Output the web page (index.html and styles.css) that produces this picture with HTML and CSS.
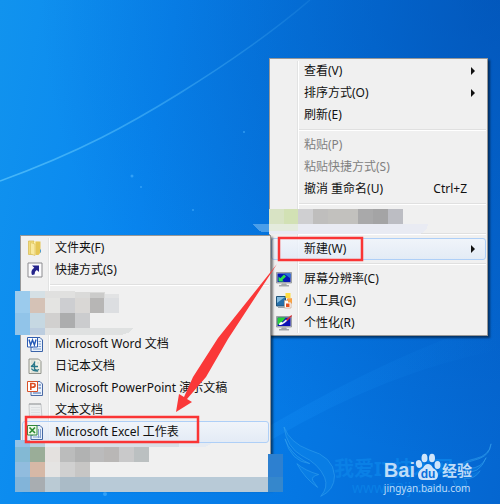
FILE: index.html
```html
<!DOCTYPE html>
<html lang="zh-CN">
<head>
  <meta charset="UTF-8">
  <meta name="viewport" content="width=device-width, initial-scale=1.0">
  <title>新建 Microsoft Excel 工作表</title>
  <link rel="stylesheet" href="styles.css">
</head>
<body>
<main class="desktop">
  <svg class="wallpaper" viewBox="0 0 500 504" preserveAspectRatio="none" aria-hidden="true">
    <defs>
      <linearGradient id="glow" x1="0" y1="1" x2="1" y2="0">
        <stop offset="0" stop-color="#6cd0ff" stop-opacity=".6"/>
        <stop offset="1" stop-color="#6cd0ff" stop-opacity=".1"/>
      </linearGradient>
      <linearGradient id="ray" x1="0" y1="0" x2="1" y2="0">
        <stop offset="0" stop-color="#1c9bff" stop-opacity=".2"/>
        <stop offset="1" stop-color="#1c9bff" stop-opacity="0"/>
      </linearGradient>
    </defs>
    <path d="M0 181C80 152 130 124 180 93S275 30 310 0" fill="none" stroke="url(#glow)" stroke-width="1.5"/>
    <path d="M271 425Q400 350 500 320V350Q390 370 271 440Z" fill="url(#ray)"/>
    <g fill="#4db4ff" opacity=".6">
      <circle cx="132" cy="176" r="1.5"/><circle cx="141" cy="187" r="1"/>
      <circle cx="244" cy="132" r="1"/><circle cx="193" cy="210" r="1"/><circle cx="105" cy="494" r="2"/>
    </g>
  </svg>

  <ul class="menu menu-main">
    <li><button type="button" class="item"><span class="label">查看(V)</span><span class="arrow"></span></button></li>
    <li><button type="button" class="item"><span class="label">排序方式(O)</span><span class="arrow"></span></button></li>
    <li><button type="button" class="item"><span class="label">刷新(E)</span></button></li>
    <li class="sep"></li>
    <li><button type="button" class="item" disabled><span class="label">粘贴(P)</span></button></li>
    <li><button type="button" class="item" disabled><span class="label">粘贴快捷方式(S)</span></button></li>
    <li><button type="button" class="item"><span class="label">撤消 重命名(U)</span><span class="shortcut">Ctrl+Z</span></button></li>
    <li class="sep"></li>
    <li class="hidden-item"></li>
    <li class="sep"></li>
    <li><button type="button" class="item active"><span class="label">新建(W)</span><span class="arrow"></span></button></li>
    <li class="sep"></li>
    <li><button type="button" class="item">
      <svg class="icon" viewBox="0 0 16 16">
        <path d="M.5 1.500h15v10.500H.5z" fill="#b9bcc0" stroke="#85898e" stroke-width=".7"/>
        <path d="M1.500 2.500h13v8.500h-13z" fill="#0718b8"/>
        <path d="M8 2.500h6.500v5z" fill="#2670d8"/>
        <path d="M2.500 10.500V5.500l1.800 1.700L8 3.500l2 2-3.700 3.500 1.500 1.500z" fill="#2ee04a"/>
        <path d="M6 12.500h4l1 1.500h2v1.500H3V14h2z" fill="#a3a6aa"/>
      </svg>
      <span class="label">屏幕分辨率(C)</span></button></li>
    <li><button type="button" class="item">
      <svg class="icon" viewBox="0 0 16 16">
        <path d="M.5 3.500h9v9.500h-9z" fill="#266fa9" stroke="#1f5379"/>
        <path d="M1 4h8L1 10z" fill="#84bcdf"/>
        <path d="M2 13.500h7v1.500H2z" fill="#9ba5ad"/>
        <path d="M9.500 0h5v5h-5z" fill="#ffdc40"/><path d="M11 5.500h5v5h-5z" fill="#f39135"/>
        <path d="M8.500 7.500h6.500v7.500H8.500z" fill="#fff" stroke="#c5a58c" stroke-width=".7"/>
        <path d="M10 10.500h3.500v3.500H10z" fill="#e7501f"/>
        <path d="M12 5.500h4v4h-4z" fill="#f9a244"/>
      </svg>
      <span class="label">小工具(G)</span></button></li>
    <li><button type="button" class="item">
      <svg class="icon" viewBox="0 0 16 16">
        <path d="M.5 1.500h15v10.500H.5z" fill="#b9bcc0" stroke="#85898e" stroke-width=".7"/>
        <path d="M1.500 2.500h13v8.500h-13z" fill="#0e12b4"/>
        <path d="M1.500 2.500H10L5 8l-3.500 2z" fill="#29cf36"/>
        <path d="M3 10q0-3 3-3l1.500 1.200Q7 10 3 10z" fill="#fff"/>
        <path d="M6.500 7.500L10 4.500l1.200 1.300-3.500 3z" fill="#eceef4"/>
        <path d="M10 4.500L15.500 0l.5 1-4.700 5z" fill="#d52e35"/>
        <path d="M6 12.500h4l1 1.500h2v1.500H3V14h2z" fill="#a3a6aa"/>
      </svg>
      <span class="label">个性化(R)</span></button></li>
  </ul>

  <ul class="menu menu-new">
    <li><button type="button" class="item">
      <svg class="icon" viewBox="0 0 16 16">
        <path d="M1.500 1h5.500v13.500H1.500z" fill="#f2dc7c" stroke="#d5b84e" stroke-width=".7"/>
        <path d="M7 1.500h5V14H7z" fill="#fff3b5"/>
        <path d="M8.500 1.500h5v11l-2 2.500h-3z" fill="#e5c654"/>
        <path d="M3.500 2.500L8 4v11.500L3.500 14z" fill="#f9e99f" stroke="#d9bd58" stroke-width=".6"/>
        <path d="M13 9.500h1v3h-1z" fill="#4d9bd0"/>
      </svg>
      <span class="label">文件夹(F)</span></button></li>
    <li><button type="button" class="item">
      <svg class="icon" viewBox="0 0 16 16">
        <path d="M1 1h14v14H1z" fill="#fbfbfd" stroke="#8b8b8f"/>
        <path d="M5 3.500h7v6.500L9.800 8Q7.500 9 7.500 12.500L5 13Q3 8.500 7.300 5.700z" fill="#25248b"/>
      </svg>
      <span class="label">快捷方式(S)</span></button></li>
    <li class="sep"></li>
    <li class="hidden-item"></li>
    <li class="hidden-item"></li>
    <li><button type="button" class="item">
      <svg class="icon" viewBox="0 0 16 16">
        <path d="M6 1.500h7l2.500 2.500v11.500H4V11h2z" fill="#e9f1fc" stroke="#3a63a8"/>
        <path d="M11.500 5.500h2.500M11.500 8h2.500M11.500 10.500h2.500M6 13h8" stroke="#7d9fd0"/>
        <path d="M.5 1.500h10v9.500H.5z" fill="#fff" stroke="#2d5bb0"/>
        <path d="M2 3.500l1.600 5.500 1.900-5 1.900 5L9 3.500" fill="none" stroke="#2459b7" stroke-width="1.400"/>
      </svg>
      <span class="label">Microsoft Word 文档</span></button></li>
    <li><button type="button" class="item">
      <svg class="icon" viewBox="0 0 16 16">
        <path d="M2 1h9.500L14 3.500V15.500H2z" fill="#eeefe5" stroke="#90938c"/>
        <path d="M4 3h4M4 5h2M10 5h2M4 14h8" stroke="#bdc6bf" stroke-width=".7"/>
        <path d="M8 3.500Q7 7 4 8.500h7M7.500 5.500v5.500q2 2 4.500.5M4.500 10.500q1 2.500 6.500 2.500" fill="none" stroke="#277789" stroke-width="1.300"/>
      </svg>
      <span class="label">日记本文档</span></button></li>
    <li><button type="button" class="item">
      <svg class="icon" viewBox="0 0 16 16">
        <path d="M6 1.500h7l2.500 2.500v11.500H4V11h2z" fill="#e9f1fc" stroke="#4d6ba5"/>
        <path d="M11.500 5h2.500M11.500 8h2.500M6 13h8" stroke="#7897c8" stroke-width="1.500"/>
        <path d="M.5 1.500h10v10H.5z" fill="#fff" stroke="#d65029"/>
        <path d="M3.800 10V3.500h2q2.500 0 2.300 1.900Q8 7.300 5.500 7.300H4" fill="none" stroke="#dc4c22" stroke-width="1.600"/>
      </svg>
      <span class="label">Microsoft PowerPoint 演示文稿</span></button></li>
    <li><button type="button" class="item">
      <svg class="icon" viewBox="0 0 16 16">
        <path d="M2 2h12l1 14H2.500z" fill="#eceeef" stroke="#b6b8ba" stroke-width=".7"/>
        <path d="M3 1v2M5 1v2M7 1v2M9 1v2M11 1v2M13 1v2" stroke="#8c8e90" stroke-width=".8"/>
        <path d="M4 5.500h9M4 8h9M4 10.500h9M4 13h9" stroke="#d5d9dc" stroke-width=".7"/>
      </svg>
      <span class="label">文本文档</span></button></li>
    <li><button type="button" class="item active">
      <svg class="icon" viewBox="0 0 16 16">
        <path d="M6 1.500h7l2.500 2.500v11.500H4V11h2z" fill="#e9f1fc" stroke="#4569a4"/>
        <path d="M11.500 5v9M13.500 5v9M6 13h8" stroke="#85a2d0"/>
        <path d="M.5 1.500h9.500v9.500H.5z" fill="#effaeb" stroke="#31893a"/>
        <path d="M2.500 3.500l5.500 5.500M8 3.500L2.500 9" stroke="#2d8c34" stroke-width="1.700"/>
      </svg>
      <span class="label">Microsoft Excel 工作表</span></button></li>
    <li class="hidden-item"></li>
    <li class="hidden-item"></li>
  </ul>

  <!-- pixelated blocks over the private menu entries -->
  <svg class="overlay" viewBox="0 0 500 504" width="500" height="504" aria-hidden="true" shape-rendering="crispEdges">
    <path d="M269 224h159q-1 8-8 10H269z" fill="#e9ebf3"/>
    <path d="M253 224h16v8h-6q-6-1-10-8z" fill="#4a9ee9"/>
    <path d="M269 209h15v15h-15z" fill="#d8e3c4"/><path d="M284 209h14v15h-14z" fill="#d2e1b4"/>
    <path d="M269 224h29v7h-29z" fill="#e4ebdd"/>
    <path d="M298 209h15v15h-15z" fill="#cfcfd1"/><path d="M313 209h15v15h-15z" fill="#bfbebd"/>
    <path d="M328 209h30v15h-30z" fill="#c2c1be"/><path d="M358 209h15v15h-15z" fill="#a9a9aa"/>
    <path d="M373 209h15v15h-15z" fill="#a4a4a5"/><path d="M388 209h15v15h-15z" fill="#bcbdc3"/>

    <path d="M15 291h15v22H15z" fill="#9bcbed"/><path d="M15 313h15v22H15z" fill="#91c4e9"/>
    <path d="M30 291h15v7H30z" fill="#d5e0e5"/><path d="M45 291h30v7H45z" fill="#e0e0df"/>
    <path d="M75 292h30v6H75z" fill="#dadad9"/><path d="M90 293h14v5H90z" fill="#cbcbca"/><path d="M105 294h14v4h-14z" fill="#e2e3e4"/>
    <path d="M30 298h15v15H30z" fill="#d5c2b6"/><path d="M45 298h15v15H45z" fill="#e4e4e2"/>
    <path d="M60 298h15v15H60z" fill="#cdced1"/><path d="M75 298h15v15H75z" fill="#d9d7d5"/>
    <path d="M90 298h14v15H90z" fill="#b7b6b5"/><path d="M104 298h15v15h-15z" fill="#dcdee1"/>
    <path d="M30 313h15v15H30z" fill="#c6d8e2"/><path d="M45 313h15v15H45z" fill="#d1d0cf"/>
    <path d="M60 313h15v15H60z" fill="#acadae"/><path d="M75 313h15v15H75z" fill="#cbccce"/>
    <path d="M30 328h15v7H30z" fill="#bccddf"/><path d="M45 328h88q-3 6-13 7H45z" fill="#dfe1e1"/>

    <path d="M15 440h15v7H15z" fill="#94c3e7"/><path d="M30 443h15v4H30z" fill="#bad1de"/>
    <path d="M45 443h166q-2 3-7 4H45z" fill="#e6ebf2"/><path d="M60 443h119v4H60z" fill="#d9dfe6"/>
    <path d="M15 447h15v15H15z" fill="#83b9d4"/><path d="M30 447h15v15H30z" fill="#9aad98"/>
    <path d="M45 447h15v15H45z" fill="#e4e1df"/><path d="M60 447h15v15H60z" fill="#bbbcbc"/>
    <path d="M75 447h15v15H75z" fill="#b1b2b2"/><path d="M90 447h14v15H90z" fill="#bbbbbc"/>
    <path d="M104 447h15v15h-15z" fill="#b9b7b6"/><path d="M119 447h15v15h-15z" fill="#c9c9ca"/><path d="M134 447h15v15h-15z" fill="#bbc0c1"/>
    <path d="M15 462h15v15H15z" fill="#91bcde"/><path d="M30 462h15v15H30z" fill="#d6b8a6"/>
    <path d="M45 462h15v15H45z" fill="#e5e4e3"/><path d="M60 462h15v15H60z" fill="#d0d0d0"/><path d="M75 462h15v15H75z" fill="#c7c6c5"/>
    <path d="M15 477h15v15H15z" fill="#82b4d9"/><path d="M30 477h15v15H30z" fill="#a8adb1"/>
    <path d="M45 477h15v15H45z" fill="#bacad4"/><path d="M60 477h30v15H60z" fill="#aabbc7"/>
    <path d="M90 477h178v15H90z" fill="#b8cad7"/>
    <path d="M268 454h15v23h-15z" fill="#2d80d0"/><path d="M268 477h15v15h-15z" fill="#3587cc"/>
  </svg>

  <!-- red marks: both boxes and the arrow between them -->
  <svg class="overlay" viewBox="0 0 500 504" width="500" height="504" aria-hidden="true">
    <path d="M279 238h83v22h-83zM26 417h172v25H26z" fill="none" stroke="#fa3535" stroke-width="2.500"/>
    <path d="M277 264L218 338L193 377L184 397L179 394L176 412L192 402L187 399L206 377L228 339Z" fill="#fa3838"/>
  </svg>

  <div class="watermark">
    <svg class="wings" viewBox="0 0 220 76" aria-hidden="true">
      <g fill="#128bea" fill-opacity=".35" stroke="#3ba5ef" stroke-opacity=".5">
        <path d="M2 2Q8 18 27 25Q52 32 53 51Q53 66 39 72Q47 63 43 53Q37 39 20 31Q5 23 2 2z"/>
        <path d="M3 14Q8 28 22 36L28 39Q9 37 3 14z"/>
        <path d="M15 39Q23 46 37 50Q29 52 31 56L36 63Q23 54 15 39z"/>
        <path d="M211 19Q209 31 195 34Q181 37 179 43Q188 36 199 34Q210 30 211 19z"/>
        <path d="M206 33Q202 43 189 44L183 47Q199 51 206 33z"/>
        <path d="M200 46Q195 55 184 54Q190 59 182 67Q175 64 173 56"/>
      </g>
    </svg>
    <div class="site-name">我爱IT技术网</div>
    <div class="site-url">www.52ij.com</div>
  </div>

  <div class="brand">
    <div class="brand-name">
      <span class="latin">Bai</span>
      <svg class="paw" viewBox="0 0 26 28" aria-hidden="true">
        <g fill="#cfe5fb">
          <ellipse cx="4" cy="11" rx="3" ry="4" transform="rotate(-15 4 11)"/>
          <ellipse cx="9.500" cy="5" rx="3" ry="4.300"/>
          <ellipse cx="17" cy="5" rx="3" ry="4.300"/>
          <ellipse cx="22.500" cy="12" rx="3" ry="4"/>
          <path d="M13 11q3 0 5 4 5 3 5 7 0 5-5 5H8q-5 0-5-5 0-4 5-7 2-4 5-4z"/>
        </g>
        <text class="paw-text" x="13" y="25" text-anchor="middle">du</text>
      </svg>
      <span class="cjk">经验</span>
    </div>
    <div class="brand-url">jingyan.baidu.com</div>
  </div>
</main>
</body>
</html>
```

FILE: styles.css
```css
* { box-sizing: border-box; }
body {
  margin: 0;
  font-family: "Noto Sans", "Noto Sans CJK SC", sans-serif;
  font-size: 12px;
}
.desktop {
  position: relative;
  min-height: 100vh;
  overflow: hidden;
  background:
    radial-gradient(ellipse at 100% 0, rgba(0, 70, 165, 0.55), transparent 65%),
    linear-gradient(100deg, #1193ee 0%, #0886f0 30%, #0577e3 65%, #0566d0 100%);
}
.wallpaper {
  position: absolute;
  top: 0;
  left: 0;
  width: 100%;
  height: 100%;
}
.overlay {
  position: absolute;
  top: 0;
  left: 0;
  pointer-events: none;
}

/* menus */
.menu {
  position: absolute;
  margin: 0;
  padding: 1px;
  list-style: none;
  border: 1px solid #979797;
  background: #f0f0f0;
  box-shadow: 2px 2px 2px rgba(0, 0, 0, 0.5);
}
.menu-main {
  left: 269px;
  top: 58px;
  width: 219px;
}
.menu-new {
  left: 20px;
  top: 235px;
  width: 251px;
}
.menu::before {
  content: "";
  position: absolute;
  top: 2px;
  bottom: 2px;
  left: 27px;
  border-left: 1px solid #e2e3e3;
  border-right: 1px solid #fff;
}
.item {
  position: relative;
  display: flex;
  align-items: center;
  width: 100%;
  height: 22px;
  padding: 0 10px 0 32px;
  border: 1px solid transparent;
  border-radius: 3px;
  background: none;
  color: #111;
  font: inherit;
  line-height: 20px;
  text-align: left;
  white-space: nowrap;
}
.item:disabled { color: #808080; }
.item.active {
  border-color: #aecff7;
  background: linear-gradient(rgba(240, 245, 252, 0.8), rgba(224, 234, 247, 0.8));
}
.icon {
  width: 16px;
  height: 16px;
  margin-left: -28px;
  margin-right: 12px;
}
.label { flex: 1; }
.shortcut { margin-right: 8px; }
.arrow {
  border: 4px solid transparent;
  border-left-color: #111;
  border-right: 0;
}
.sep {
  height: 8px;
  margin-left: 28px;
  padding-top: 3px;
}
.sep::before {
  content: "";
  display: block;
  border-top: 1px solid #e0e0e0;
  border-bottom: 1px solid #fff;
}
.hidden-item { height: 22px; }

/* site marks in the corner */
.watermark {
  position: absolute;
  right: 0;
  bottom: 3px;
  width: 218px;
  height: 76px;
  padding: 32px 0 0 52px;
  color: #0a80e6;
}
.wings {
  position: absolute;
  top: 0;
  left: 0;
  width: 100%;
}
.site-name {
  font-size: 20px;
  font-weight: bold;
  line-height: 24px;
}
.site-url {
  padding-left: 18px;
  font-size: 14px;
  line-height: 14px;
}
.brand {
  position: absolute;
  right: 28px;
  bottom: 9px;
  color: #bfdcf8;
}
.brand-name {
  display: flex;
  align-items: flex-end;
  height: 28px;
}
.latin {
  font-family: "Liberation Sans", sans-serif;
  font-size: 20px;
  font-weight: bold;
  line-height: 22px;
}
.paw {
  width: 26px;
  height: 28px;
}
.paw-text {
  fill: #0a6fdb;
  font-family: "Liberation Sans", sans-serif;
  font-size: 12px;
  font-weight: bold;
}
.cjk {
  margin-left: 1px;
  font-size: 15px;
  font-weight: bold;
  line-height: 22px;
}
.brand-url {
  font-size: 10px;
  line-height: 14px;
}
```
